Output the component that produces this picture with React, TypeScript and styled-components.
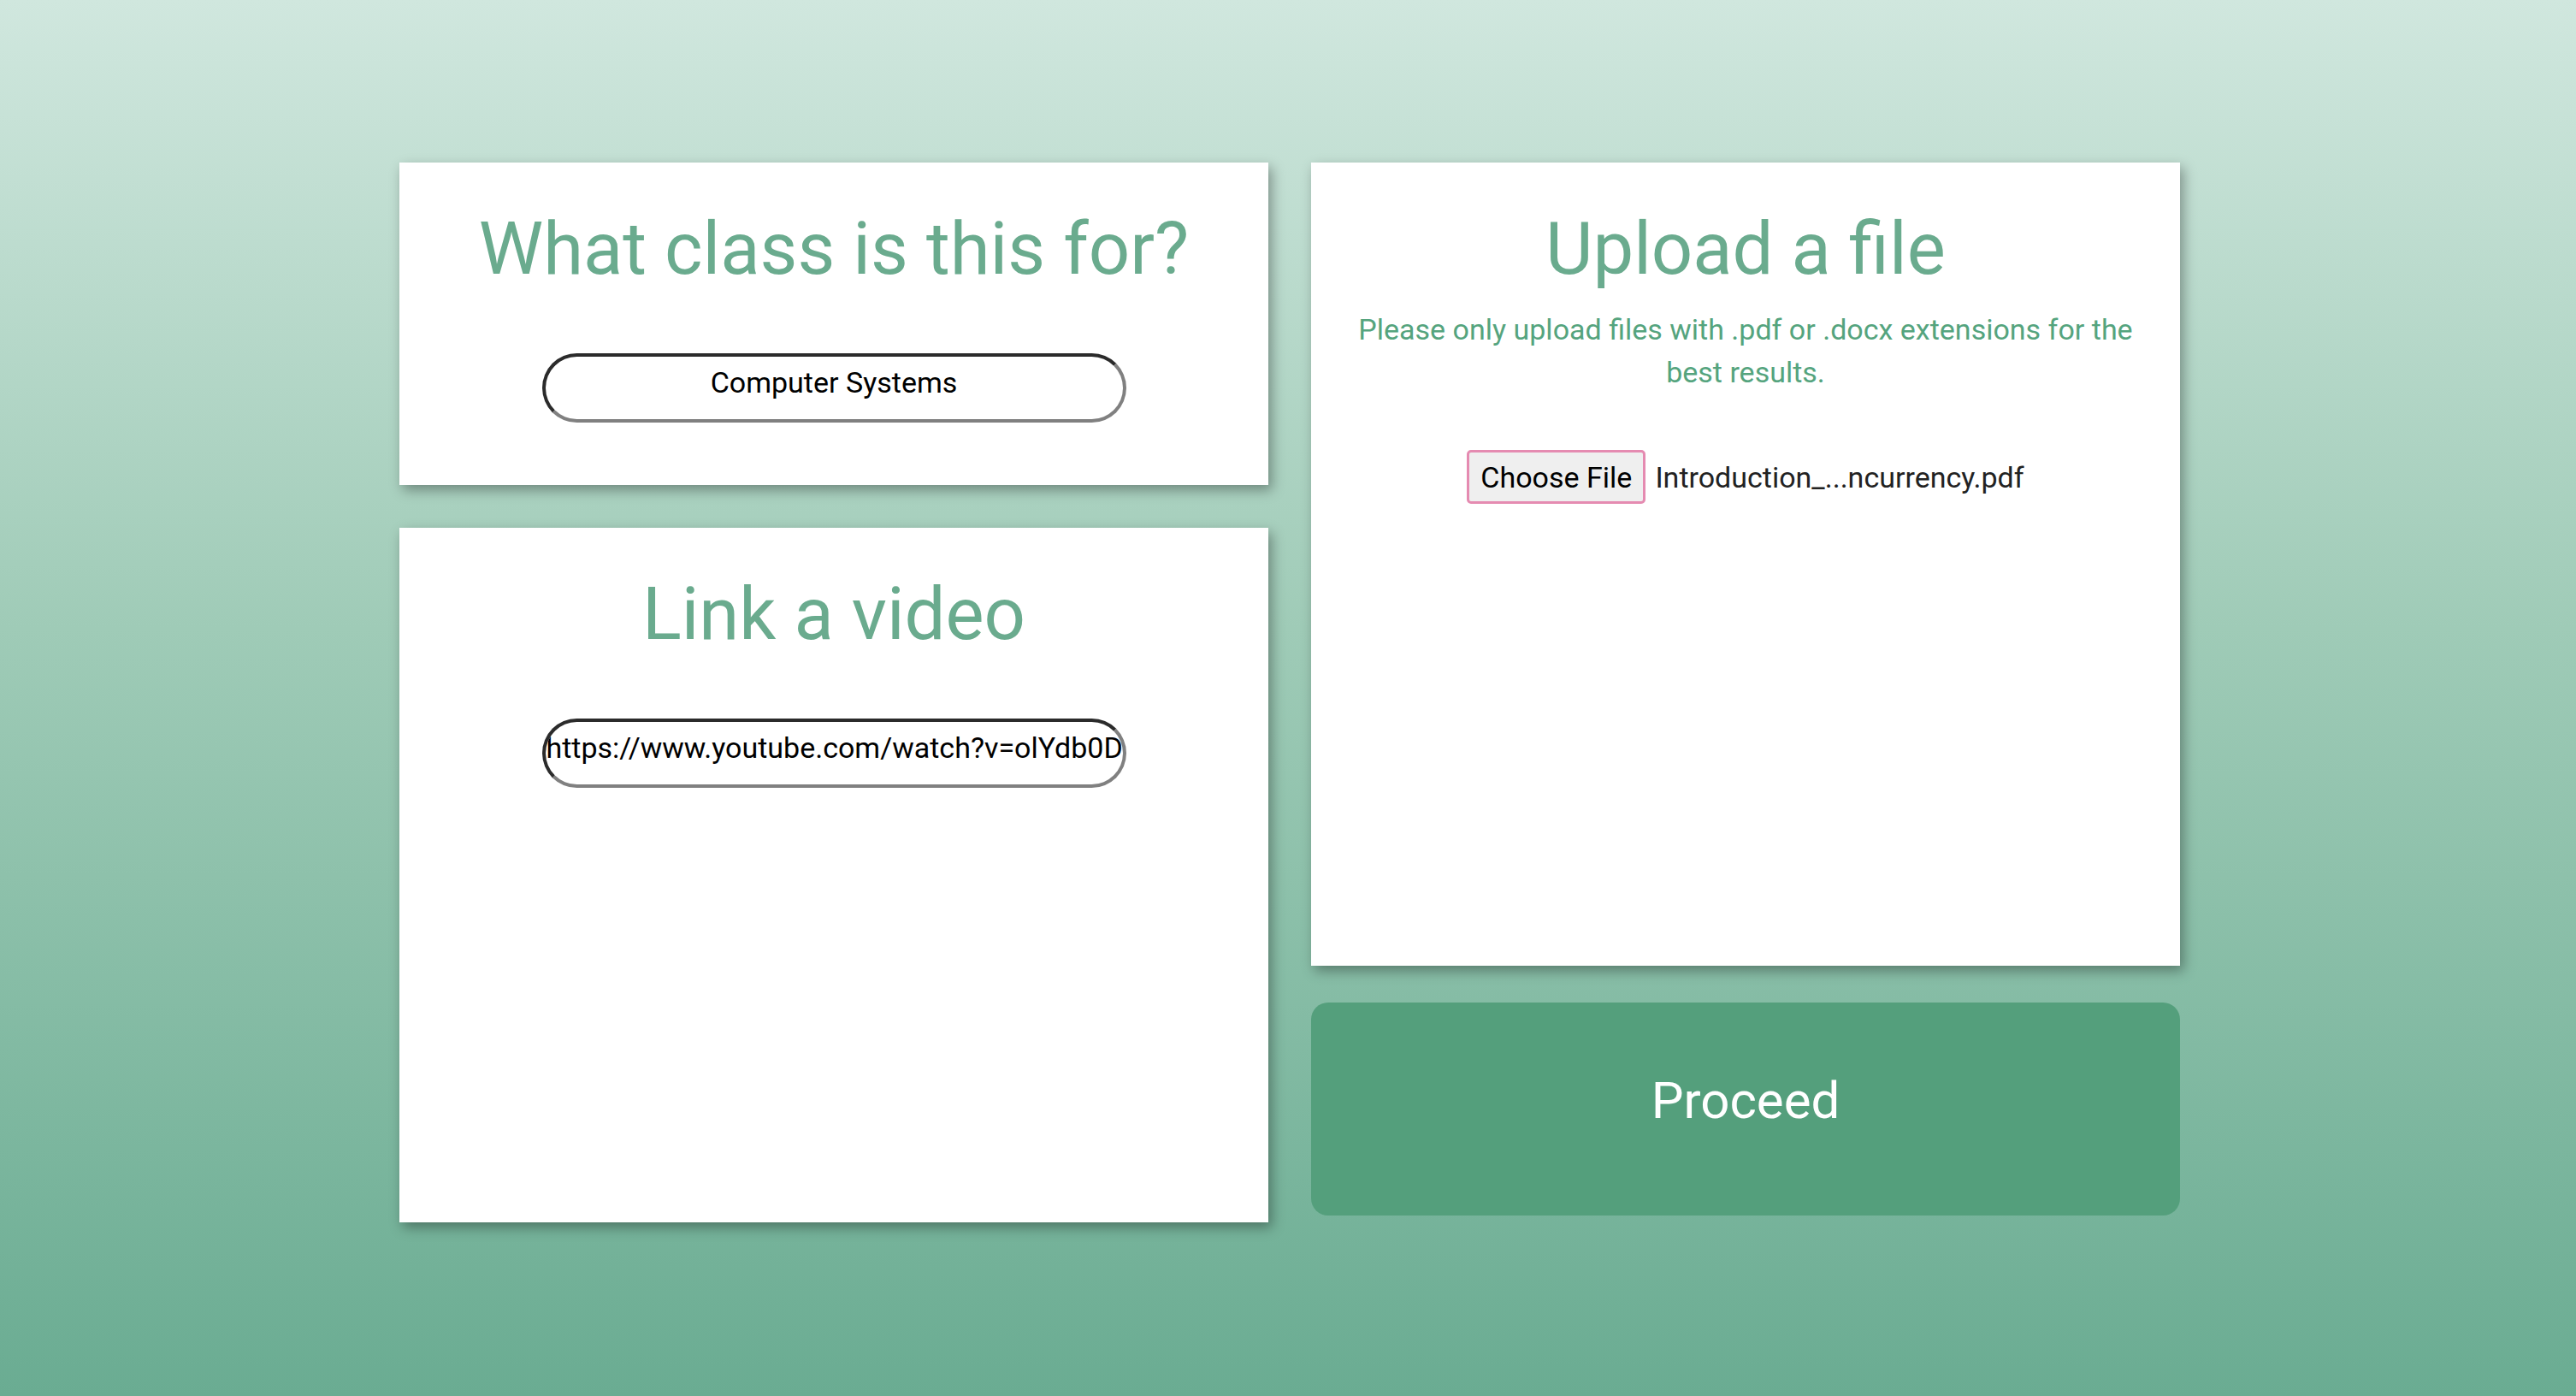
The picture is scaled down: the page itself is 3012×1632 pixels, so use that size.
import React from "react";
import styled, { createGlobalStyle } from "styled-components";

const GlobalStyle = createGlobalStyle`
  html, body {
    margin: 0;
    padding: 0;
  }
  body {
    font-family: Roboto, "Liberation Sans", Arial, sans-serif;
  }
  * { box-sizing: border-box; }
`;

const Page = styled.main`
  width: 100%;
  min-height: 1632px;
  background: linear-gradient(180deg, #d0e7de 0%, #9fcbb7 45%, #6aac92 100%);
  display: flex;
  justify-content: center;
  align-items: flex-start;
  padding: 190px 0 0 4px;
  gap: 50px;
`;

const Column = styled.div<{ $gap: number }>`
  width: 1016px;
  display: flex;
  flex-direction: column;
  gap: ${(p) => p.$gap}px;
`;

const Card = styled.section<{ $height: number }>`
  height: ${(p) => p.$height}px;
  background: #ffffff;
  box-shadow: 4px 6px 14px rgba(0, 0, 0, 0.35);
  display: flex;
  flex-direction: column;
  align-items: center;
  padding: 52px 40px 0;
`;

const Title = styled.h1`
  margin: 0;
  font-family: Roboto, "Liberation Sans", Arial, sans-serif;
  font-weight: 400;
  font-size: 85px;
  line-height: 98px;
  color: #6aab8e;
  text-align: center;
`;

const TextInput = styled.input`
  margin-top: 73px;
  width: 683px;
  height: 81px;
  border-radius: 41px;
  border-style: solid;
  border-width: 4px;
  border-color: #2b2b2b #808080 #808080 #2b2b2b;
  background: #ffffff;
  padding: 0 1px 14px;
  font-family: Roboto, "Liberation Sans", Arial, sans-serif;
  font-size: 34px;
  color: #000000;
  text-align: center;
  outline: none;
`;

const Hint = styled.p`
  margin: 20px 0 0;
  font-family: Roboto, "Liberation Sans", Arial, sans-serif;
  font-size: 34px;
  line-height: 50px;
  color: #55a47e;
  text-align: center;
`;

const FileRow = styled.div`
  margin-top: 66px;
  display: flex;
  align-items: center;
  gap: 11px;
  font-family: Roboto, "Liberation Sans", Arial, sans-serif;
  font-size: 34px;
`;

const ChooseButton = styled.button`
  height: 63px;
  width: 209px;
  padding: 0;
  border: 3px solid #e58bb1;
  border-radius: 5px;
  background: #efefef;
  color: #000000;
  font-family: Roboto, "Liberation Sans", Arial, sans-serif;
  font-size: 34px;
  cursor: pointer;
`;

const FileName = styled.span`
  color: #222222;
`;

const Proceed = styled.button`
  height: 249px;
  width: 100%;
  border: none;
  border-radius: 20px;
  background: #549f7c;
  color: #ffffff;
  font-family: Roboto, "Liberation Sans", Arial, sans-serif;
  font-size: 60px;
  font-weight: 400;
  display: flex;
  align-items: center;
  justify-content: center;
  padding: 0 0 20px;
  cursor: pointer;
`;

export default function App() {
  return (
    <>
      <GlobalStyle />
      <Page>
        <Column $gap={50}>
          <Card $height={377}>
            <Title>What class is this for?</Title>
            <TextInput type="text" defaultValue="Computer Systems" />
          </Card>
          <Card $height={812}>
            <Title>Link a video</Title>
            <TextInput
              type="text"
              defaultValue="https://www.youtube.com/watch?v=olYdb0D"
            />
          </Card>
        </Column>
        <Column $gap={43}>
          <Card $height={939}>
            <Title>Upload a file</Title>
            <Hint>
              Please only upload files with .pdf or .docx extensions for the
              best results.
            </Hint>
            <FileRow>
              <ChooseButton type="button">Choose File</ChooseButton>
              <FileName>Introduction_...ncurrency.pdf</FileName>
            </FileRow>
          </Card>
          <Proceed type="button">Proceed</Proceed>
        </Column>
      </Page>
    </>
  );
}
